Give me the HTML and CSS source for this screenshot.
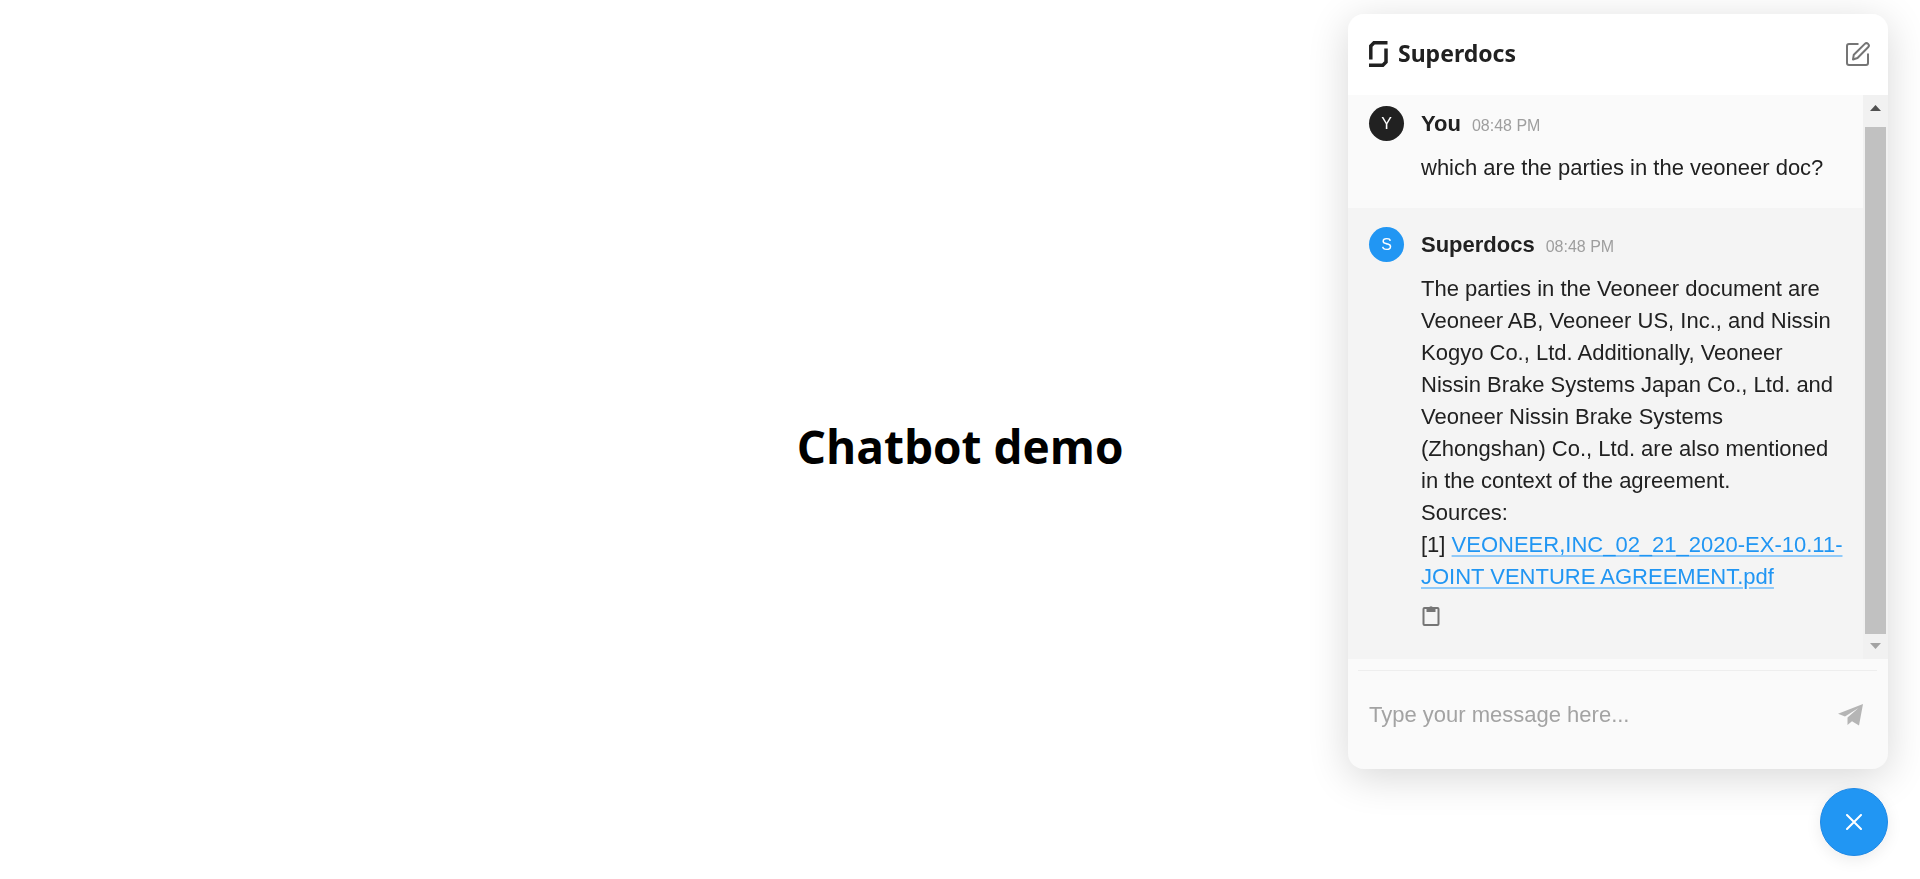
FILE: index.html
```html
<!DOCTYPE html>
<html lang="en">
<head>
<meta charset="utf-8">
<meta name="viewport" content="width=device-width, initial-scale=1">
<title>Chatbot demo</title>
<link rel="stylesheet" href="styles.css">
</head>
<body>
<main class="demo">
  <h1 class="demo-title">Chatbot demo</h1>
</main>

<section class="chat" aria-label="Superdocs chat">
  <header class="chat-header">
    <div class="brand">
      <svg class="brand-mark" width="19" height="26" viewBox="0 0 19 26" fill="none" stroke="#212121" stroke-width="3.500" aria-hidden="true">
        <path d="M1.800 18.500V5L5 1.800H18.500"/>
        <path d="M17 7.500V21l-3.200 3.200H0"/>
      </svg>
      <span class="brand-name">Superdocs</span>
    </div>
    <button class="icon-button" type="button" aria-label="New chat">
      <svg width="24" height="24" viewBox="0 0 24 24" fill="none" stroke="#757575" stroke-width="2" stroke-linejoin="round" aria-hidden="true">
        <path d="M12.500 2H3a2 2 0 0 0-2 2v17a2 2 0 0 0 2 2h17a2 2 0 0 0 2-2v-9.500"/>
        <path d="M7 17.500l.8-4.800L18.800 1.900a2.300 2.300 0 0 1 3.300 3.300L11.500 16z"/>
      </svg>
    </button>
  </header>

  <div class="chat-body">
    <div class="messages">
      <article class="message message-user">
        <div class="avatar avatar-user" aria-hidden="true">Y</div>
        <div class="message-main">
          <div class="message-meta"><strong class="author">You</strong><time class="time">08:48 PM</time></div>
          <p class="message-text">which are the parties in the veoneer doc?</p>
        </div>
      </article>
      <article class="message message-bot">
        <div class="avatar avatar-bot" aria-hidden="true">S</div>
        <div class="message-main">
          <div class="message-meta"><strong class="author">Superdocs</strong><time class="time">08:48 PM</time></div>
          <p class="message-text">The parties in the Veoneer document are Veoneer AB, Veoneer US, Inc., and Nissin Kogyo Co., Ltd. Additionally, Veoneer Nissin Brake Systems Japan Co., Ltd. and Veoneer Nissin Brake Systems (Zhongshan) Co., Ltd. are also mentioned in the context of the agreement.<br>Sources:<br>[1] <a class="source" href="#source">VEONEER,INC_02_21_2020-EX-10.11-JOINT VENTURE AGREEMENT.pdf</a></p>
          <button class="icon-button copy" type="button" aria-label="Copy message">
            <svg width="20" height="22" viewBox="0 0 20 22" aria-hidden="true">
              <rect x="2.500" y="3" width="15" height="17" rx="1" fill="none" stroke="#757575" stroke-width="2"/>
              <path fill="#757575" fill-rule="evenodd" d="M5.500 3h2.300a2.300 2.300 0 0 1 4.400 0h2.300v4h-9zM10 2.500a.8.8 0 1 0 0 1.600.8.8 0 0 0 0-1.600z"/>
            </svg>
          </button>
        </div>
      </article>
    </div>
    <div class="scrollbar" aria-hidden="true">
      <svg width="11" height="6" viewBox="0 0 11 6"><path fill="#505050" d="M0 6L5.500 0 11 6z"/></svg>
      <div class="scroll-thumb"></div>
      <svg width="11" height="6" viewBox="0 0 11 6"><path fill="#a3a3a3" d="M0 0h11L5.500 6z"/></svg>
    </div>
  </div>

  <form class="composer">
    <input class="composer-input" type="text" placeholder="Type your message here..." aria-label="Message">
    <button class="icon-button" type="button" aria-label="Send message">
      <svg width="25" height="22" viewBox="0 0 25 22" fill="#b5b5b5" aria-hidden="true">
        <path d="M25 0L21 21.500 14 17.300 9.500 21V13.500L20.500 4 7 12.500 0 9.800z"/>
      </svg>
    </button>
  </form>
</section>

<button class="launcher" type="button" aria-label="Close chat">
  <svg width="16" height="16" viewBox="0 0 16 16" fill="none" stroke="#fff" stroke-width="2" stroke-linecap="round" aria-hidden="true">
    <path d="M1 1l14 14M15 1L1 15"/>
  </svg>
</button>
</body>
</html>
```
FILE: styles.css
```css
* {
  box-sizing: border-box;
}

body {
  margin: 0;
  background: #fff;
  color: #212121;
  font-family: "Liberation Sans", Arial, sans-serif;
}

.demo {
  display: flex;
  align-items: center;
  justify-content: center;
  min-height: 100vh;
  padding-top: 12px;
}

.demo-title {
  margin: 0;
  color: #000;
  font: 700 46px/64px "Open Sans", "Noto Sans", sans-serif;
}

.chat {
  position: fixed;
  top: 14px;
  right: 32px;
  bottom: 110px;
  display: flex;
  flex-direction: column;
  width: 540px;
  max-width: calc(100vw - 64px);
  overflow: hidden;
  border-radius: 16px;
  background: #fafafa;
  box-shadow: 0 8px 40px rgba(0, 0, 0, 0.16);
}

.chat-header {
  display: flex;
  align-items: center;
  justify-content: space-between;
  padding: 23px 18px 25px 21px;
  background: #fff;
}

.brand {
  display: flex;
  align-items: center;
  gap: 10px;
}

.brand-name {
  font: 700 23px/33px "Noto Sans", sans-serif;
}

.icon-button {
  display: flex;
  padding: 0;
  border: 0;
  background: none;
  cursor: pointer;
}

.chat-body {
  display: flex;
  flex: 1;
  min-height: 0;
}

.messages {
  flex: 1;
  min-width: 0;
  overflow: hidden;
  background: #f4f4f4;
}

.message {
  display: flex;
  gap: 17px;
  padding: 19px 16px 32px 21px;
}

.message-user {
  padding-top: 11px;
  padding-bottom: 24px;
  background: #fafafa;
}

.avatar {
  display: flex;
  flex: none;
  align-items: center;
  justify-content: center;
  width: 35px;
  height: 35px;
  border-radius: 50%;
  color: #fff;
  font-size: 16px;
}

.avatar-user {
  background: #212121;
}

.avatar-bot {
  background: #2196f3;
}

.message-main {
  flex: 1;
  min-width: 0;
}

.message-meta {
  display: flex;
  align-items: baseline;
  gap: 11px;
  margin-bottom: 9px;
  line-height: 35px;
}

.author {
  font-size: 22px;
}

.time {
  color: #9e9e9e;
  font-size: 16px;
}

.message-text {
  margin: 0;
  font-size: 22px;
  line-height: 32px;
}

.source {
  color: #2196f3;
  text-decoration: underline 2px #90caf9;
  text-underline-offset: 3px;
}

.copy {
  margin-top: 12px;
}

.scrollbar {
  display: flex;
  flex: none;
  flex-direction: column;
  align-items: center;
  width: 25px;
  padding: 10px 0;
  background: #f1f1f1;
}

.scroll-thumb {
  flex: 1;
  width: 21px;
  margin: 16px 0 9px;
  background: #c1c1c1;
}

.composer {
  display: flex;
  align-items: center;
  gap: 16px;
  margin: 11px 11px 0 10px;
  padding: 24px 14px 35px 11px;
  border-top: 1px solid #eee;
}

.composer-input {
  flex: 1;
  min-width: 0;
  height: 39px;
  padding: 0;
  border: 0;
  outline: 0;
  background: none;
  color: #212121;
  font: 22px "Liberation Sans", Arial, sans-serif;
}

.composer-input::placeholder {
  color: #a3a3a3;
}

.launcher {
  position: fixed;
  right: 32px;
  bottom: 23px;
  display: flex;
  align-items: center;
  justify-content: center;
  width: 68px;
  height: 68px;
  border: 1px solid #1e88e5;
  border-radius: 50%;
  background: #2196f3;
  box-shadow: 0 4px 16px rgba(0, 0, 0, 0.08);
  cursor: pointer;
}
```
